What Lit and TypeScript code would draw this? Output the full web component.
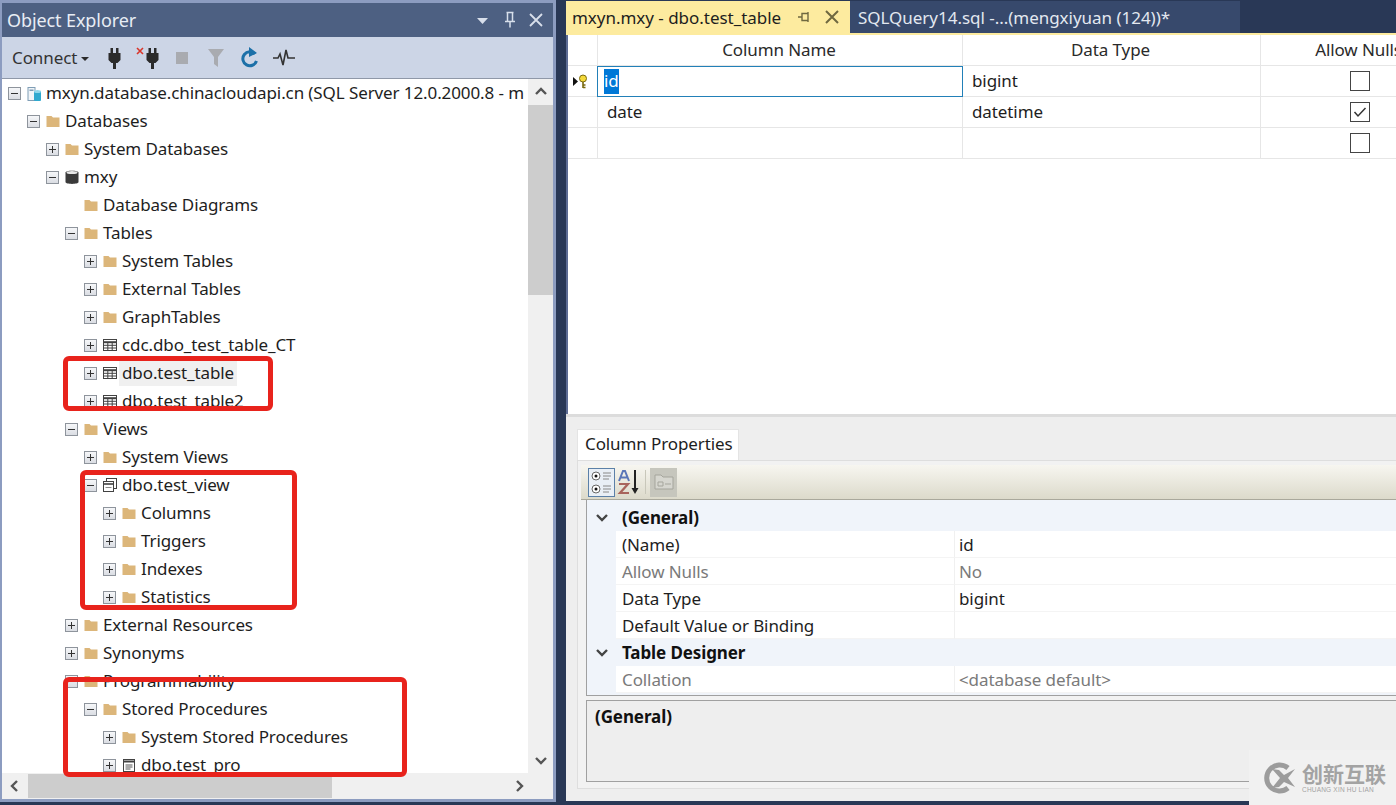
import { LitElement, html, css, svg } from 'lit';
import { customElement } from 'lit/decorators.js';

type Exp = '+' | '-' | '';
type Icon = 'folder' | 'server' | 'db' | 'table' | 'view' | 'proc';
interface Node { level: number; exp: Exp; icon: Icon; label: string; hot?: boolean }

const TREE: Node[] = [
  { level: 0, exp: '-', icon: 'server', label: 'mxyn.database.chinacloudapi.cn (SQL Server 12.0.2000.8 - m' },
  { level: 1, exp: '-', icon: 'folder', label: 'Databases' },
  { level: 2, exp: '+', icon: 'folder', label: 'System Databases' },
  { level: 2, exp: '-', icon: 'db', label: 'mxy' },
  { level: 3, exp: '', icon: 'folder', label: 'Database Diagrams' },
  { level: 3, exp: '-', icon: 'folder', label: 'Tables' },
  { level: 4, exp: '+', icon: 'folder', label: 'System Tables' },
  { level: 4, exp: '+', icon: 'folder', label: 'External Tables' },
  { level: 4, exp: '+', icon: 'folder', label: 'GraphTables' },
  { level: 4, exp: '+', icon: 'table', label: 'cdc.dbo_test_table_CT' },
  { level: 4, exp: '+', icon: 'table', label: 'dbo.test_table', hot: true },
  { level: 4, exp: '+', icon: 'table', label: 'dbo.test_table2' },
  { level: 3, exp: '-', icon: 'folder', label: 'Views' },
  { level: 4, exp: '+', icon: 'folder', label: 'System Views' },
  { level: 4, exp: '-', icon: 'view', label: 'dbo.test_view' },
  { level: 5, exp: '+', icon: 'folder', label: 'Columns' },
  { level: 5, exp: '+', icon: 'folder', label: 'Triggers' },
  { level: 5, exp: '+', icon: 'folder', label: 'Indexes' },
  { level: 5, exp: '+', icon: 'folder', label: 'Statistics' },
  { level: 3, exp: '+', icon: 'folder', label: 'External Resources' },
  { level: 3, exp: '+', icon: 'folder', label: 'Synonyms' },
  { level: 3, exp: '-', icon: 'folder', label: 'Programmability' },
  { level: 4, exp: '-', icon: 'folder', label: 'Stored Procedures' },
  { level: 5, exp: '+', icon: 'folder', label: 'System Stored Procedures' },
  { level: 5, exp: '+', icon: 'proc', label: 'dbo.test_pro' },
];

const nodeIcon = (k: Icon) => {
  switch (k) {
    case 'folder':
      return svg`<path d="M0.500 3h5l1.500 1.500h6.500V14H0.500z" fill="#dcb67a"/>`;
    case 'server':
      return svg`<rect x="1" y="2.500" width="7" height="13" fill="#f1f5f8" stroke="#7f9db5"/><rect x="2.500" y="4.500" width="4" height="1.500" fill="#7f9db5"/><rect x="7" y="6" width="7" height="10" rx="1" fill="#2fa9cf"/><ellipse cx="10.500" cy="6.500" rx="3.500" ry="1.500" fill="#8fd6ea"/>`;
    case 'db':
      return svg`<path d="M0.500 3.500C0.500 1 13.500 1 13.500 3.500V13C13.500 15.500 0.500 15.500 0.500 13z" fill="#3a3a3a"/><ellipse cx="7" cy="3.500" rx="5.500" ry="1.500" fill="#e8e8e8"/>`;
    case 'table':
      return svg`<rect x="0.500" y="2.500" width="13" height="11" fill="#fff" stroke="#424242"/><path d="M0.500 5.200h13" stroke="#424242" stroke-width="2"/><path d="M0.500 8.300h13M0.500 11h13M4.800 5v8.500M9.200 5v8.500" stroke="#424242"/>`;
    case 'view':
      return svg`<rect x="3.500" y="1.500" width="10" height="10" fill="#fff" stroke="#424242"/><rect x="0.500" y="4.500" width="10" height="10" fill="#fff" stroke="#424242"/><path d="M0.500 7h10" stroke="#424242" stroke-width="1.600"/><path d="M2.500 10.500h6" stroke="#888"/>`;
    case 'proc':
      return svg`<rect x="1.500" y="2.500" width="11" height="12" fill="#fff" stroke="#424242"/><path d="M1.500 4.500h11" stroke="#424242" stroke-width="2"/><path d="M3.500 8h7M3.500 10h7M3.500 12h5" stroke="#555"/>`;
  }
};

const plug = svg`<path d="M3.500 1h2.500v5H3.500zM9 1h2.500v5H9zM1.500 6h12v7l-3 3H4.500l-3-3z" fill="#2b2b2b"/><rect x="6" y="15" width="3" height="7" fill="#2b2b2b"/>`;

@customElement('app-root')
export class AppRoot extends LitElement {
  static styles = css`
    :host {
      display: block;
      width: 1396px;
      height: 805px;
      overflow: hidden;
      position: relative;
      background: #293856;
      font-family: "Noto Sans", "Open Sans", sans-serif;
      font-size: 17px;
      letter-spacing: -0.1px;
      color: #1e1e1e;
    }
    .app { display: flex; height: 805px; }

    /* object explorer */
    .oe {
      width: 556px;
      height: 802px;
      box-sizing: border-box;
      display: flex;
      flex-direction: column;
      flex: none;
      background: #fff;
      border: solid #8c9cc0;
      border-width: 3px 3px 3px 2px;
    }
    .title {
      height: 34px;
      flex: none;
      display: flex;
      align-items: center;
      padding-left: 5px;
      background: #4d6082;
      color: #e8edf5;
      font-size: 18px;
    }
    .title .name { flex: 1; }
    .title svg { display: block; }
    .toolbar {
      height: 42px;
      flex: none;
      display: flex;
      align-items: center;
      background: #ccd5e6;
      border-bottom: 1px solid #8f98a8;
      box-sizing: border-box;
      padding-left: 10px;
    }
    .connect { width: 64px; color: #333; }
    .caret {
      width: 0;
      height: 0;
      border: 4.5px solid transparent;
      border-top-color: #2b2b2b;
      border-bottom: 0;
      margin: 2px 8px 0 5px;
    }
    .tool { width: 34px; height: 26px; display: flex; justify-content: center; align-items: center; flex: none; }
    .treewrap { flex: 1; display: flex; flex-direction: column; min-height: 0; }
    .treemain { flex: 1; display: flex; min-height: 0; }
    .tree { flex: 1; overflow: hidden; min-width: 0; }
    .row { height: 28px; display: flex; align-items: center; white-space: nowrap; }
    .exp {
      width: 13px;
      height: 13px;
      box-sizing: border-box;
      border: 1px solid #8e949c;
      background: linear-gradient(#f6f7f9, #dadde3);
      position: relative;
      flex: none;
      margin-right: 6px;
    }
    .exp::before { content: ""; position: absolute; left: 2px; right: 2px; top: 5px; height: 1px; background: #333; }
    .exp.plus::after { content: ""; position: absolute; top: 2px; bottom: 2px; left: 5px; width: 1px; background: #333; }
    .noexp { width: 13px; margin-right: 6px; flex: none; }
    .ico { flex: none; display: block; margin-right: 4px; }
    .label { padding: 0 1px; line-height: 26px; }
    .label.hot { background: #f0f0f0; padding: 0 3px; margin-left: -2px; }
    .vbar { width: 25px; flex: none; background: #f0f0f0; display: flex; flex-direction: column; }
    .vthumb { height: 190px; background: #cdcdcd; flex: none; }
    .arrow { height: 26px; flex: none; display: flex; align-items: center; justify-content: center; }
    .vgap { flex: 1; }
    .hbar { height: 26px; flex: none; background: #f0f0f0; display: flex; align-items: center; }
    .hbar .arrow { width: 26px; }
    .hthumb { width: 304px; height: 24px; background: #cdcdcd; }
    .hgap { flex: 1; }
    .hcorner { width: 41px; flex: none; display: flex; justify-content: flex-start; }

    /* designer */
    .right { flex: 1; min-width: 0; display: flex; flex-direction: column; margin-left: 10px; height: 801px; }
    .tabs { height: 33px; display: flex; flex: none; padding-top: 1px; box-sizing: border-box; letter-spacing: -0.03px; }
    .tab { display: flex; align-items: center; box-sizing: border-box; white-space: nowrap; }
    .tab.on { width: 284px; background: #fdeb9f; padding-left: 6px; color: #1e1e1e; }
    .tab.on .t { flex: 1; }
    .tab.off { width: 390px; background: #37496c; padding-left: 8px; color: #e3e8f0; }
    .tabline { height: 2px; background: #fdeb9f; flex: none; }
    .designer { height: 379px; flex: none; background: #fff; border-left: 2px solid #5d6c94; overflow: hidden; }
    .sep { height: 3px; flex: none; background: #dcdcdc; }
    .grid { display: grid; grid-template-columns: 30px 365px 298px 198px; width: 891px; }
    .hd, .cell {
      box-sizing: border-box;
      height: 31px;
      border-right: 1px solid #e6e6e6;
      border-bottom: 1px solid #e6e6e6;
      display: flex;
      align-items: center;
      white-space: nowrap;
    }
    .hd { justify-content: center; color: #2a2a2a; padding: 0 2px 2px 0; }
    .cell { padding: 0 0 2px 9px; }
    .cell.gut { padding: 0 0 0 5px; }
    .cell.active { border: 1px solid #2280b8; padding: 0 0 0 6px; margin-left: -1px; }
    .cell.center { justify-content: center; padding: 0; }
    .sel { background: #0078d7; color: #fff; width: 15px; height: 25px; line-height: 24px; }
    .chk { width: 20px; height: 20px; box-sizing: border-box; border: 1px solid #444; display: flex; align-items: center; justify-content: center; background: #fff; }

    .lower {
      flex: 1;
      background: #eeeeee;
      padding: 12px 0 12px 11px;
      display: flex;
      flex-direction: column;
      min-height: 0;
    }
    .ptab {
      width: 162px;
      height: 31px;
      flex: none;
      box-sizing: border-box;
      background: #fff;
      border: 1px solid #e4e4e4;
      border-bottom: 0;
      display: flex;
      align-items: center;
      padding: 0 0 3px 7px;
    }
    .pframe {
      flex: 1;
      min-height: 0;
      display: flex;
      flex-direction: column;
      border-left: 1px solid #dedede;
      border-top: 1px solid #dedede;
      border-bottom: 1px solid #dedede;
      padding: 4px 0 1px 3px;
      background: #f2f2f2;
    }
    .ptool {
      height: 35px;
      flex: none;
      display: flex;
      align-items: center;
      padding-left: 7px;
      box-sizing: border-box;
      background: linear-gradient(#f7f6f0, #dcdacb);
      border-bottom: 1px solid #a9a89c;
    }
    .pbtn { width: 27px; height: 29px; box-sizing: border-box; display: flex; align-items: center; justify-content: center; flex: none; }
    .pbtn.on { border: 1px solid #5b80a8; background: #e9eff6; }
    .pdiv { width: 1px; height: 24px; background: #c8c7ba; margin: 0 4px 0 3px; }
    .pgrid { margin-left: 5px; border-left: 1px solid #a0a0a0; border-bottom: 1px solid #a0a0a0; background: #f0f4fa; padding-top: 4px; height: 196px; box-sizing: border-box; flex: none; }
    .prow { height: 27px; display: flex; align-items: center; }
    .prow .tw { width: 29px; flex: none; display: flex; justify-content: center; }
    .prow .k { width: 338px; padding-left: 6px; box-sizing: border-box; flex: none; white-space: nowrap; }
    .prow .v { flex: 1; padding-left: 4px; white-space: nowrap; }
    .prow.cat { font-weight: 700; color: #111; }
    .prow.item .k, .prow.item .v { background: #fff; height: 27px; line-height: 27px; border-bottom: 1px solid #f4f4f4; box-sizing: border-box; }
    .prow.item .v { border-left: 1px solid #f0f0f0; }
    .prow.dim .k, .prow.dim .v { color: #7a7a7a; }
    .phelp {
      margin: 4px 0 5px 5px;
      flex: 1;
      border: 1px solid #a0a0a0;
      border-right: 0;
      background: #eeeeee;
      padding: 4px 8px;
      font-weight: 700;
      color: #111;
      min-height: 0;
    }

    /* annotations drawn on top of the screenshot */
    .mark { position: absolute; box-sizing: border-box; border: 5px solid #e8231c; border-radius: 6px; }
    .wm {
      position: absolute;
      left: 1249px;
      top: 750px;
      width: 147px;
      height: 55px;
      box-sizing: border-box;
      background: #f1f1f1;
      display: flex;
      align-items: center;
      padding-left: 11px;
      color: #a3a3a3;
    }
    .wm .cn { font-family: "Noto Sans CJK SC", sans-serif; font-size: 21px; font-weight: 700; line-height: 23px; letter-spacing: 0; margin-left: 4px; }
    .wm .en { font-family: "Liberation Sans", sans-serif; font-size: 6.5px; line-height: 7px; letter-spacing: 0.2px; margin: 1px 0 0 4px; white-space: nowrap; }
  `;

  private node(n: Node) {
    return html`<div class="row" style="padding-left:${6 + n.level * 19}px">
      ${n.exp === ''
        ? html`<span class="noexp"></span>`
        : html`<span class="exp ${n.exp === '+' ? 'plus' : ''}"></span>`}
      <svg class="ico" width="14" height="16" viewBox="0 0 14 16">${nodeIcon(n.icon)}</svg>
      <span class="label ${n.hot ? 'hot' : ''}">${n.label}</span>
    </div>`;
  }

  private chevron(d: string, c = '#555') {
    return html`<svg width="14" height="14" viewBox="0 0 14 14"><path d="${d}" fill="none" stroke="${c}" stroke-width="2.4"/></svg>`;
  }

  private check(on: boolean) {
    return html`<span class="chk">${on
      ? html`<svg width="14" height="12" viewBox="0 0 14 12"><path d="M1.5 6l3.5 4 7.5-8" fill="none" stroke="#333" stroke-width="1.5"/></svg>`
      : ''}</span>`;
  }

  private prop(k: string, v: string, dim = false) {
    return html`<div class="prow item ${dim ? 'dim' : ''}"><span class="tw"></span><span class="k">${k}</span><span class="v">${v}</span></div>`;
  }

  private cat(k: string) {
    return html`<div class="prow cat"><span class="tw">${this.chevron('M2 4l5 5 5-5', '#444')}</span><span class="k">${k}</span></div>`;
  }

  render() {
    return html`
      <div class="app">
        <section class="oe">
          <div class="title">
            <span class="name">Object Explorer</span>
            <svg width="16" height="16" viewBox="0 0 16 16" style="margin-right:12px"><path d="M3 6h11l-5.500 6z" fill="#d8dfeb"/></svg>
            <svg width="16" height="18" viewBox="0 0 16 18" style="margin-right:10px"><path d="M4.500 1.500h7M5.500 1.500v9h5v-9M3 10.500h10M8 10.500v6" fill="none" stroke="#d8dfeb" stroke-width="1.500"/></svg>
            <svg width="16" height="16" viewBox="0 0 16 16" style="margin-right:9px"><path d="M2 2l12 12M14 2L2 14" stroke="#d8dfeb" stroke-width="1.800"/></svg>
          </div>
          <div class="toolbar">
            <span class="connect">Connect</span><span class="caret"></span>
            <span class="tool"><svg width="15" height="22" viewBox="0 0 15 22">${plug}</svg></span>
            <span class="tool"><svg width="24" height="22" viewBox="0 0 24 22"><path d="M1 1l6 6M7 1L1 7" stroke="#d9352a" stroke-width="1.600"/><g transform="translate(9 0)">${plug}</g></svg></span>
            <span class="tool"><svg width="14" height="14" viewBox="0 0 14 14"><rect x="1" y="1" width="12" height="12" fill="#a9abb0"/></svg></span>
            <span class="tool"><svg width="18" height="20" viewBox="0 0 18 20"><path d="M1 1h16l-6 8v10l-4-3V9z" fill="#a9abb0"/></svg></span>
            <span class="tool"><svg width="20" height="22" viewBox="0 0 20 22"><path d="M15 7A7 7 0 1 0 16.500 14" fill="none" stroke="#1c70a8" stroke-width="3"/><path d="M9 0l8 6-8 4z" fill="#1c70a8"/></svg></span>
            <span class="tool"><svg width="24" height="18" viewBox="0 0 24 18"><path d="M1 9h5l2-4 3 11 3-15 2 8h7" fill="none" stroke="#333" stroke-width="1.600"/></svg></span>
          </div>
          <div class="treewrap">
            <div class="treemain">
              <div class="tree">${TREE.map((n) => this.node(n))}</div>
              <div class="vbar">
                <span class="arrow">${this.chevron('M2 9l5-5 5 5')}</span>
                <span class="vthumb"></span>
                <span class="vgap"></span>
                <span class="arrow">${this.chevron('M2 5l5 5 5-5')}</span>
              </div>
            </div>
            <div class="hbar">
              <span class="arrow">${this.chevron('M9 2L4 7l5 5')}</span>
              <span class="hthumb"></span>
              <span class="hgap"></span>
              <span class="hcorner">${this.chevron('M5 2l5 5-5 5')}</span>
            </div>
          </div>
        </section>

        <section class="right">
          <div class="tabs">
            <div class="tab on">
              <span class="t">mxyn.mxy - dbo.test_table</span>
              <svg width="14" height="14" viewBox="0 0 14 14" style="margin-right:13px"><path d="M1 7h4M5 3.500h6v7H5zM11 2v10" fill="none" stroke="#6f6840" stroke-width="1.400"/></svg>
              <svg width="16" height="16" viewBox="0 0 16 16" style="margin-right:10px"><path d="M2 2l12 12M14 2L2 14" stroke="#6f6840" stroke-width="2"/></svg>
            </div>
            <div class="tab off">SQLQuery14.sql -...(mengxiyuan (124))*</div>
          </div>
          <div class="tabline"></div>
          <div class="designer">
            <div class="grid">
              <div class="hd"></div><div class="hd">Column Name</div><div class="hd">Data Type</div><div class="hd">Allow Nulls</div>
              <div class="cell gut">
                <svg width="15" height="15" viewBox="0 0 15 15"><path d="M0 3l5 4.500L0 12z" fill="#111"/><circle cx="10" cy="4.500" r="3.500" fill="#f4d93a" stroke="#7a6a10"/><path d="M10 8v6M10 11h2.500M10 13.500h2.500" stroke="#7a6a10" stroke-width="1.600"/></svg>
              </div>
              <div class="cell active"><span class="sel">id</span></div>
              <div class="cell">bigint</div>
              <div class="cell center">${this.check(false)}</div>
              <div class="cell"></div><div class="cell">date</div><div class="cell">datetime</div><div class="cell center">${this.check(true)}</div>
              <div class="cell"></div><div class="cell"></div><div class="cell"></div><div class="cell center">${this.check(false)}</div>
            </div>
          </div>
          <div class="sep"></div>
          <div class="lower">
            <div class="ptab">Column Properties</div>
            <div class="pframe">
              <div class="ptool">
                <span class="pbtn on"><svg width="24" height="26" viewBox="0 0 24 26"><circle cx="6" cy="7" r="4" fill="#fff" stroke="#666"/><circle cx="6" cy="7" r="1.500" fill="#111"/><circle cx="6" cy="20" r="4" fill="#fff" stroke="#666"/><circle cx="6" cy="20" r="1.500" fill="#111"/><path d="M13 4h8M13 7h8M13 10h6M13 17h8M13 20h8M13 23h6" stroke="#888"/></svg></span>
                <span class="pbtn"><svg width="24" height="26" viewBox="0 0 24 26"><path d="M2 12L6 2h2l4 10M4 8.500h6" fill="none" stroke="#5a76b8" stroke-width="2"/><path d="M2 15h9l-8 9h9" fill="none" stroke="#a8645c" stroke-width="2.200"/><path d="M18 1v20" stroke="#222" stroke-width="2"/><path d="M14.500 19h7L18 25z" fill="#222"/></svg></span>
                <span class="pdiv"></span>
                <span class="pbtn" style="background:#c6c6bd"><svg width="22" height="20" viewBox="0 0 22 20"><path d="M2 3h6l2 2h10v12H2z" fill="#d6d6cf" stroke="#a5a59c"/><path d="M5 10h5v4H5zM12 12h6" fill="none" stroke="#a5a59c"/></svg></span>
              </div>
              <div class="pgrid">
                ${this.cat('(General)')}
                ${this.prop('(Name)', 'id')}
                ${this.prop('Allow Nulls', 'No', true)}
                ${this.prop('Data Type', 'bigint')}
                ${this.prop('Default Value or Binding', '')}
                ${this.cat('Table Designer')}
                ${this.prop('Collation', '<database default>', true)}
              </div>
              <div class="phelp">(General)</div>
            </div>
          </div>
        </section>
      </div>

      <div class="mark" style="left:63px;top:356px;width:210px;height:55px"></div>
      <div class="mark" style="left:80px;top:470px;width:217px;height:140px"></div>
      <div class="mark" style="left:63px;top:677px;width:344px;height:100px"></div>

      <div class="wm">
        <svg width="38" height="34" viewBox="0 0 36 34"><path d="M27 7A13 13 0 1 0 27 27" fill="none" stroke="#9c9c9c" stroke-width="5"/><path d="M11 8l7 1 5 5 11-6-7 9 7 9-11-5-5 5-7 1 8-10z" fill="#9c9c9c"/></svg>
        <div>
          <div class="cn">创新互联</div>
          <div class="en">CHUANG XIN HU LIAN</div>
        </div>
      </div>
    `;
  }
}

declare global {
  interface HTMLElementTagNameMap {
    'app-root': AppRoot;
  }
}
